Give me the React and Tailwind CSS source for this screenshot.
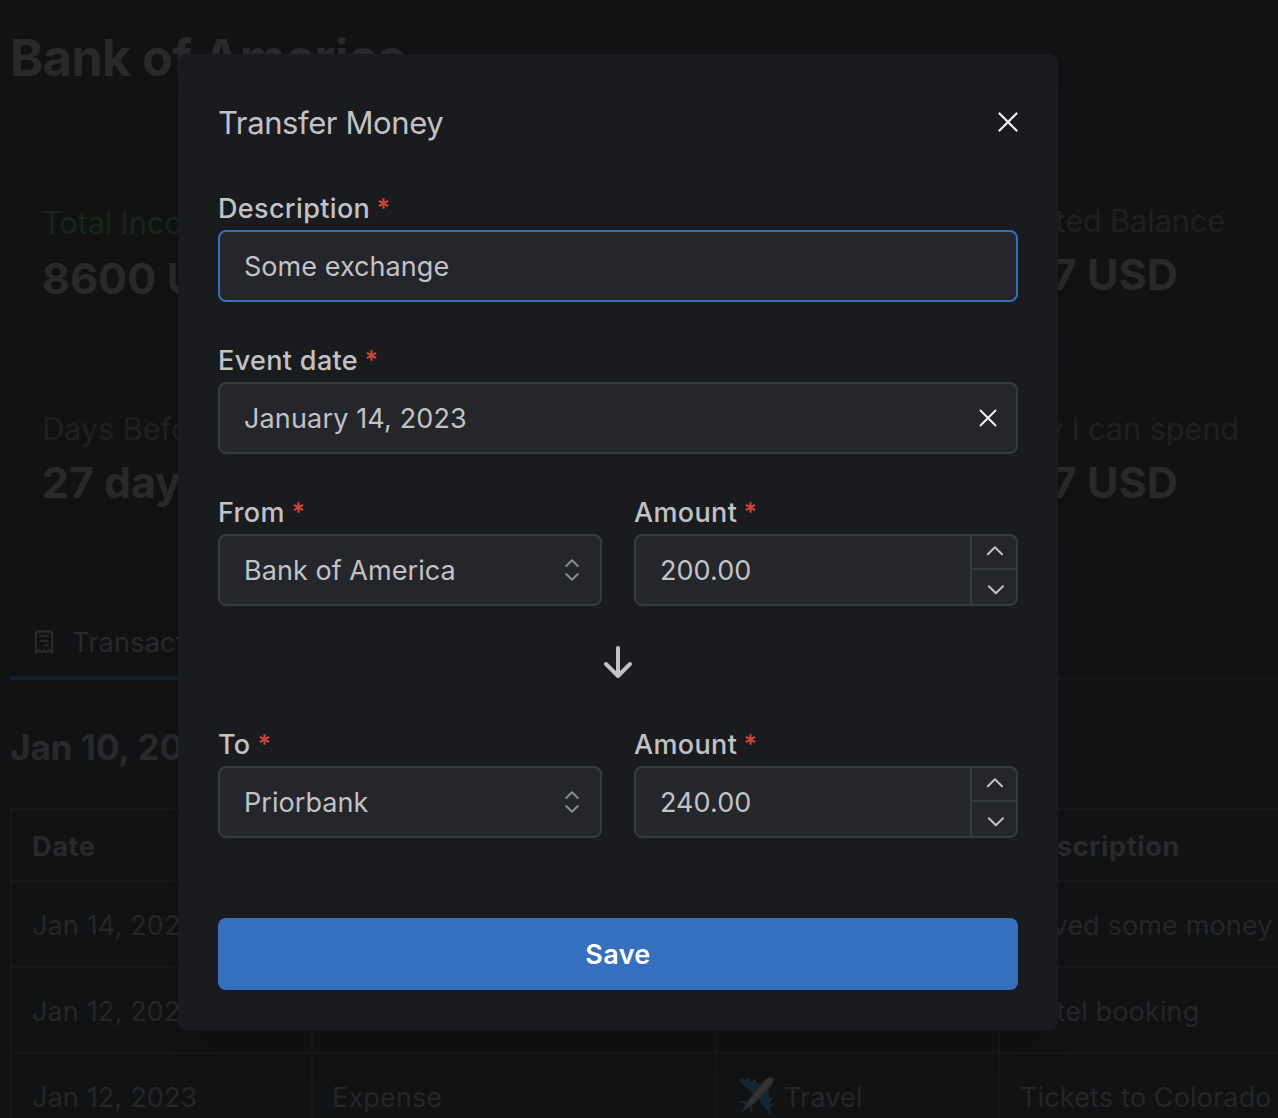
const rows = [
  { date: "Jan 14, 2023", type: "Income", category: "Savings", description: "Saved some money" },
  { date: "Jan 12, 2023", type: "Expense", category: "Hotels", description: "Hotel booking" },
  { date: "Jan 12, 2023", type: "Expense", category: "Travel", description: "Tickets to Colorado", plane: true },
];

function Plane() {
  return (
    <svg className="-mt-[6px] mr-[8px] h-[37px] w-[37px] shrink-0" viewBox="0 0 37 37" fill="none">
      <path d="M.5 1.800h3.500L23 7l-8 11L.5 3.800ZM29.500 13l2.500 22.500-1 1.200-1.200-.7L18.500 21ZM.5 24l3-.3 8 2-2 4ZM13.300 36.500l-1-.7L9.500 28l3.500-2.500Z" fill="#152531" />
      <path d="M7.500 3.200 9 .8l1.700.8-1 2.400ZM13.500 4.800 15.500 2l1.600 1-1.300 2.600ZM30 22.500l2.500-2.300 1 1.700-2.800 2.600ZM31 28l2.200-1.500.9 1.700-2.600 1.800Z" fill="#2b2b2c" />
      <path d="M33.800.8c1.400 2 .4 6-2.300 9.200L15 27 7.800 31.200 2.200 35.200l4.100-6.800L10.500 21.500 25 4.200C28 .8 32-.7 33.800.8Z" fill="#2e2e2f" />
      <path d="M28 3.200c2-1.500 4-2 4.800-1.400C33 5 30 8.500 27.500 11L13 24.500 8 28l3.600-5.300Z" fill="#343435" />
    </svg>
  );
}

function Stat({ label, value, labelClass = "text-[#1f2022]", first }) {
  return (
    <div className={first ? "flex flex-col pt-[34px] pl-8" : "flex flex-col pt-8 pl-8"}>
      <div className={`h-[50px] text-[31px] leading-[50px] tracking-[-0.25px] ${labelClass}`}>{label}</div>
      <div className={first ? "mt-[3px] h-14 text-[43px] leading-[54px] font-bold tracking-[0.1px] text-[#29292b]" : "mt-px h-14 text-[43px] leading-[54px] font-bold tracking-[-0.1px] text-[#29292b]"}>
        {value}
      </div>
    </div>
  );
}

function StatRight({ label, value, labelWidth }) {
  return (
    <div className="flex flex-col pt-8 pl-8">
      <div className={`flex h-[50px] justify-end text-[31px] leading-[50px] tracking-[-0.25px] text-[#1f2022] ${labelWidth}`}>{label}</div>
      <div className="mt-px flex h-14 w-[214px] justify-end text-[43px] leading-[54px] font-bold tracking-[0.1px] text-[#29292b]">{value}</div>
    </div>
  );
}

function Dashboard() {
  return (
    <div className="w-[1500px] pl-[10px] whitespace-nowrap">
      <h1 className="h-[164px] pt-[22px] text-[50.500px] leading-[72px] font-bold tracking-[-0.7px] text-[#29292b]">Bank of America</h1>

      <div className="grid grid-cols-[429px_429px_429px] grid-rows-[176px_176px] gap-8">
        <div className="bg-[#121213]"><Stat first label="Total Income" value="8600 USD" labelClass="text-[#18251a]" /></div>
        <div className="bg-[#121213]" />
        <div className="bg-[#121213]"><StatRight label="Estimated Balance" value="5487 USD" labelWidth="w-[261px]" /></div>
        <div className="bg-[#121213]"><Stat label="Days Before" value="27 days" /></div>
        <div className="bg-[#121213]" />
        <div className="bg-[#121213]"><StatRight label="Money I can spend" value="5487 USD" labelWidth="w-[275px]" /></div>
      </div>

      <div className="mt-[60px] flex h-[72px] border-b-4 border-[#151618]">
        <div className="flex h-[72px] w-[260px] items-center border-b-4 border-[#16202d] pl-[20px] text-[27px] tracking-[0.25px] text-[#28292b]">
          <svg className="mr-[14px] h-7 w-7 shrink-0" viewBox="0 0 24 24" fill="none" stroke="currentColor" strokeWidth="2" strokeLinecap="round" strokeLinejoin="round">
            <path d="M5 21V5a2 2 0 0 1 2-2h10a2 2 0 0 1 2 2v16l-3-2-2 2-2-2-2 2-2-2-3 2M9 7h6M9 11h6M13 15h2" />
          </svg>
          <span className="pt-[3px]">Transactions</span>
        </div>
      </div>

      <h2 className="mt-[40px] h-[56px] text-[35px] leading-[55px] font-bold text-[#29292b]">Jan 10, 2023</h2>

      <div className="mt-[32px] border-t-2 border-[#17181a] text-[27px] text-[#252627]">
        <div className="grid h-[72px] grid-cols-[301px_404px_283px_480px] border-b-2 border-[#17181a] font-bold tracking-[0.65px] text-[#29292b]">
          {["Date", "Type", "Category", "Description"].map((name) => (
            <div key={name} className="flex items-center border-l-2 border-[#17181a] pt-[5px] pl-5">{name}</div>
          ))}
        </div>
        {rows.map((row, i) => (
          <div key={i} className="grid h-[86px] grid-cols-[301px_404px_283px_480px] border-b-2 border-[#17181a] tracking-[0.15px]">
            <div className="flex items-center border-l-2 border-[#17181a] pt-[5px] pl-5">{row.date}</div>
            <div className="flex items-center border-l-2 border-[#17181a] pt-[5px] pl-[19px]">{row.type}</div>
            <div className="flex items-center border-l-2 border-[#17181a] pt-[5px] pl-[22px]">{row.plane && <Plane />}{row.category}</div>
            <div className="flex items-center border-l-2 border-[#17181a] pt-[5px] pl-5">{row.description}</div>
          </div>
        ))}
      </div>
    </div>
  );
}

function Label({ children }) {
  return (
    <div className="flex h-11 items-center pt-[3px] text-[27px] font-medium tracking-[0.35px] text-[#c1c2c5]">
      {children}
      <svg className="-mt-[13px] ml-[8px] h-[11px] w-[11px]" viewBox="0 0 12 12" stroke="#cf443b" strokeWidth="2.300" strokeLinecap="butt" role="img" aria-label="required">
        <path d="M6 .3v11.400M1 3.200l10 5.600M11 3.200 1 8.800" />
      </svg>
    </div>
  );
}

const boxClass = "flex h-[72px] items-center rounded-lg border-2 bg-[#25262b] pl-6 text-[27px] tracking-[0.05px] text-[#c1c2c5]";

function SelectField({ label, value }) {
  return (
    <div className="w-[384px]">
      <Label>{label}</Label>
      <div className={`${boxClass} justify-between border-[#373a40] pr-5`}>
        <span className="pt-[3px]">{value}</span>
        <svg className="h-6 w-4" viewBox="0 0 16 24" fill="none" stroke="#868b92" strokeWidth="2" strokeLinecap="round" strokeLinejoin="round">
          <path d="M2.200 8 8 2.200 13.800 8M2.200 16 8 21.800 13.800 16" />
        </svg>
      </div>
    </div>
  );
}

function AmountField({ value }) {
  return (
    <div className="w-[384px]">
      <Label>Amount</Label>
      <div className={`${boxClass} justify-between border-[#373a40]`}>
        <span className="pt-[3px]">{value}</span>
        <div className="flex h-full w-[46px] flex-col border-l-2 border-[#373a40]">
          <svg className="h-[34px] w-11 border-b-2 border-[#373a40]" viewBox="0 0 44 32" fill="none" stroke="#c1c2c5" strokeWidth="2" strokeLinecap="round" strokeLinejoin="round">
            <path d="M15.800 18.200 22.900 11.200 30 18.200" />
          </svg>
          <svg className="h-[34px] w-11" viewBox="0 0 44 34" fill="none" stroke="#c1c2c5" strokeWidth="2" strokeLinecap="round" strokeLinejoin="round">
            <path d="M16.800 16.200 23.900 23.200 31 16.200" />
          </svg>
        </div>
      </div>
    </div>
  );
}

function TransferModal() {
  return (
    <div className="flex h-[976px] w-[880px] flex-col rounded-lg bg-[#1a1b1e] p-10 shadow-[0_36px_28px_-14px_rgba(0,0,0,0.1)]">
      <div className="flex h-14 items-center justify-between text-[#c1c2c5]">
        <h2 className="pt-[3px] text-[31px] tracking-[-0.4px]">Transfer Money</h2>
        <svg className="h-5 w-5" viewBox="0 0 20 20" fill="none" stroke="#f0f0f1" strokeWidth="2.300" strokeLinecap="round">
          <path d="M1.500 1.500l17 17M18.500 1.500l-17 17" />
        </svg>
      </div>

      <div className="mt-9 flex flex-col gap-9">
        <div>
          <Label>Description</Label>
          <div className={`${boxClass} border-[#366fbd]`}><span className="pt-[3px]">Some exchange</span></div>
        </div>
        <div>
          <Label>Event date</Label>
          <div className={`${boxClass} justify-between border-[#373a40] pr-[19px]`}>
            <span className="pt-[3px] tracking-[0.15px]">January 14, 2023</span>
            <svg className="h-[18px] w-[18px]" viewBox="0 0 18 18" fill="none" stroke="#f0f0f1" strokeWidth="2" strokeLinecap="round">
              <path d="M1.500 1.500l15 15M16.500 1.500l-15 15" />
            </svg>
          </div>
        </div>
        <div className="flex gap-8">
          <SelectField label="From" value="Bank of America" />
          <AmountField value="200.00" />
        </div>
      </div>

      <div className="flex h-[116px] justify-center pt-8">
        <svg className="h-12 w-12" viewBox="0 0 24 24" fill="none" stroke="#c1c2c5" strokeWidth="2" strokeLinecap="round" strokeLinejoin="round">
          <path d="M12 5v14M18 13l-6 6M6 13l6 6" />
        </svg>
      </div>

      <div className="flex gap-8">
        <SelectField label="To" value="Priorbank" />
        <AmountField value="240.00" />
      </div>

      <button className="mt-20 h-[72px] shrink-0 rounded-lg bg-[#366fbd] pt-[3px] text-[27px] font-semibold tracking-[0.35px] text-white">Save</button>
    </div>
  );
}

export default function App() {
  return (
    <div className="relative h-[1118px] w-[1278px] overflow-hidden bg-[#111214] font-['Inter','Liberation_Sans',sans-serif]">
      <Dashboard />
      <div className="absolute inset-0 flex items-start pt-[54px] pl-[178px]">
        <TransferModal />
      </div>
    </div>
  );
}
